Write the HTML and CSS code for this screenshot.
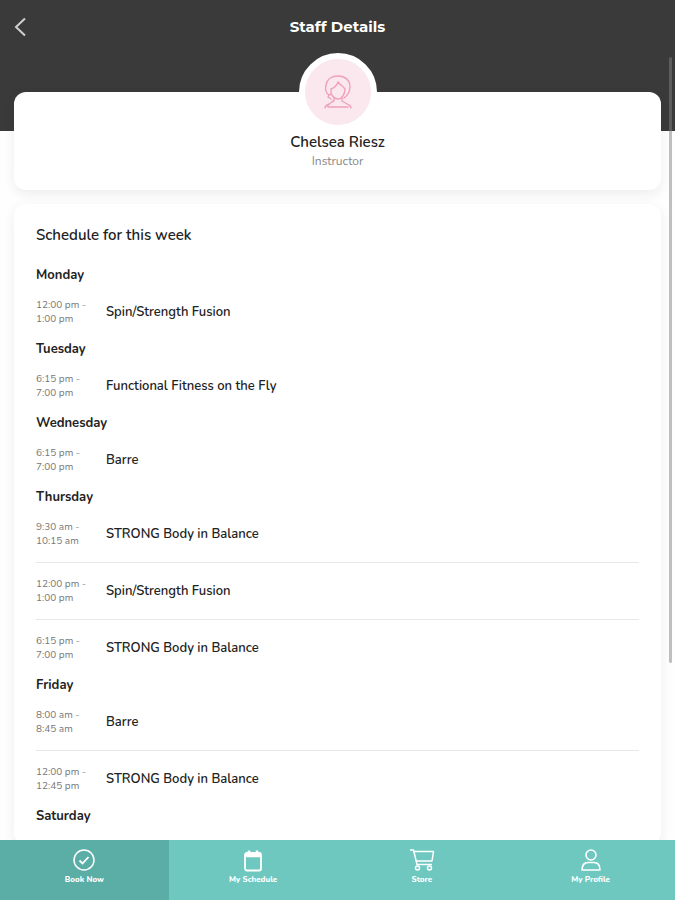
FILE: index.html
```html
<!DOCTYPE html>
<html lang="en">
<head>
    <meta charset="UTF-8">
    <meta name="viewport" content="width=device-width, initial-scale=1.0">
    <title>Staff Details</title>
    <link rel="stylesheet" href="styles.css">
</head>
<body>
    <header class="topbar">
        <button class="back" type="button" aria-label="Back">
            <svg width="12" height="20" viewBox="0 0 12 20" fill="none" stroke="#d0d0d0" stroke-width="2"><path d="M11 1.500L2 10l9 8.500"/></svg>
        </button>
        <h1>Staff Details</h1>
    </header>

    <main class="content">
        <div class="scroll-area">
            <div class="banner"></div>

            <section class="card profile">
                <div class="avatar">
                    <svg width="30" height="36" viewBox="0 0 30 36" fill="none" stroke="#f0a0b8" stroke-width="1.400" stroke-linecap="round" stroke-linejoin="round">
                        <path d="M8 25L5 23L6 21C3 19 2 15 3 11C4 5 9 2 15 2C22 2 27 6 27 13C27 18 25 21 21 24"/>
                        <path d="M6 21C9 21 8 18 8 15C11 14 14 11 15 8C17 11 20 12 22 15C22 20 19 25 15 25C12 25 9 22 8 19"/>
                        <path d="M11 24v3L4 31q-2 1-2 3M19 24v3l7 4q2 1 2 3M5 33h20M10 27l-6 5"/>
                    </svg>
                </div>
                <h2>Chelsea Riesz</h2>
                <p>Instructor</p>
            </section>

            <section class="card schedule">
                <h2>Schedule for this week</h2>

                <h3>Monday</h3>
                <ul>
                    <li><span class="time">12:00 pm - 1:00 pm</span><span class="class-name">Spin/Strength Fusion</span></li>
                </ul>

                <h3>Tuesday</h3>
                <ul>
                    <li><span class="time">6:15 pm - 7:00 pm</span><span class="class-name">Functional Fitness on the Fly</span></li>
                </ul>

                <h3>Wednesday</h3>
                <ul>
                    <li><span class="time">6:15 pm - 7:00 pm</span><span class="class-name">Barre</span></li>
                </ul>

                <h3>Thursday</h3>
                <ul>
                    <li><span class="time">9:30 am - 10:15 am</span><span class="class-name">STRONG Body in Balance</span></li>
                    <li><span class="time">12:00 pm - 1:00 pm</span><span class="class-name">Spin/Strength Fusion</span></li>
                    <li><span class="time">6:15 pm - 7:00 pm</span><span class="class-name">STRONG Body in Balance</span></li>
                </ul>

                <h3>Friday</h3>
                <ul>
                    <li><span class="time">8:00 am - 8:45 am</span><span class="class-name">Barre</span></li>
                    <li><span class="time">12:00 pm - 12:45 pm</span><span class="class-name">STRONG Body in Balance</span></li>
                </ul>

                <h3>Saturday</h3>
            </section>
        </div>
        <div class="scrollbar"></div>
    </main>

    <nav class="tabbar">
        <a href="#book" class="active">
            <svg width="24" height="24" viewBox="0 0 24 24" fill="none" stroke="currentColor" stroke-width="1.500"><circle cx="12" cy="12" r="10"/><path d="M7.500 12.500l3 3l6-6.500" stroke-width="1.800"/></svg>
            Book Now
        </a>
        <a href="#schedule">
            <svg width="24" height="24" viewBox="0 0 24 24" fill="none" stroke="currentColor" stroke-width="1.800"><rect x="4" y="5" width="16" height="17.500" rx="2"/><path d="M4 7h16" stroke-width="4.500"/><path d="M8 2.500v3M16 2.500v3" stroke-width="2.500"/></svg>
            My Schedule
        </a>
        <a href="#store">
            <svg width="26" height="24" viewBox="0 0 26 24" fill="none" stroke="currentColor" stroke-width="1.500" stroke-linejoin="round"><path d="M1 2h3.500L8 16.500h15M5 3.500H24.500L23 13H7"/><circle cx="8.500" cy="20" r="2"/><circle cx="20.500" cy="20" r="2"/></svg>
            Store
        </a>
        <a href="#profile">
            <svg width="24" height="24" viewBox="0 0 24 24" fill="none" stroke="currentColor" stroke-width="1.600" stroke-linejoin="round"><circle cx="12" cy="7" r="5"/><path d="M3 22c0-5 2.500-7.500 6-7.500h6c3.500 0 6 2.500 6 7.500z"/></svg>
            My Profile
        </a>
    </nav>
</body>
</html>
```

FILE: styles.css
```css
* {
    box-sizing: border-box;
}

body {
    font-family: Nunito, "Noto Sans", sans-serif;
    background-color: #fefefe;
    color: #222;
    margin: 0;
    height: 100vh;
    display: flex;
    flex-direction: column;
}

h1, h2, h3, p, ul {
    margin: 0;
    padding: 0;
}

.topbar {
    background-color: #3a3a3a;
    color: #fff;
    display: grid;
    grid-template-columns: 40px 1fr 40px;
    align-items: center;
    flex: none;
    height: 53px;
}

.topbar h1 {
    font-family: Montserrat, Inter, sans-serif;
    font-size: 15px;
    font-weight: 700;
    line-height: 20px;
    text-align: center;
}

.back {
    background: none;
    border: none;
    padding: 0;
    height: 40px;
    display: flex;
    align-items: center;
    justify-content: center;
    cursor: pointer;
}

.content {
    position: relative;
    flex: 1;
    min-height: 0;
}

.scroll-area {
    height: 100%;
    overflow-y: auto;
    scrollbar-width: none;
}

.scrollbar {
    position: absolute;
    top: 4px;
    right: 3px;
    width: 3px;
    height: 77%;
    border-radius: 2px;
    background-color: rgba(128, 128, 128, 0.5);
}

.banner {
    background-color: #3a3a3a;
    height: 78px;
}

.card {
    background-color: #fff;
    border-radius: 12px;
    margin: 0 14px;
    box-shadow: 0 4px 12px rgba(40, 40, 60, 0.08);
}

.profile {
    display: flex;
    flex-direction: column;
    align-items: center;
    margin-top: -39px;
    padding-bottom: 21px;
}

.avatar {
    display: flex;
    align-items: center;
    justify-content: center;
    width: 78px;
    height: 78px;
    margin-top: -39px;
    border: 6px solid #fff;
    border-radius: 50%;
    background-color: #fae8ee;
}

.profile h2 {
    font-size: 15px;
    font-weight: 600;
    line-height: 22px;
}

.profile p {
    color: #888;
    font-size: 12px;
    line-height: 16px;
}

.schedule {
    margin-top: 14px;
    padding: 20px 22px;
}

.schedule h2 {
    font-size: 15px;
    font-weight: 600;
    line-height: 22px;
    margin-bottom: 20px;
}

.schedule h3 {
    font-size: 13px;
    font-weight: 700;
    line-height: 18px;
}

.schedule ul {
    list-style: none;
}

.schedule li {
    display: flex;
    align-items: center;
    gap: 16px;
    padding: 14px 0;
}

.schedule li + li {
    border-top: 1px solid #e8e8e8;
}

.time {
    width: 54px;
    color: #777;
    font-size: 10px;
    line-height: 14px;
}

.class-name {
    font-size: 13px;
    font-weight: 600;
    line-height: 18px;
}

.tabbar {
    display: flex;
    flex: none;
    height: 60px;
    background-color: #6ec8c0;
}

.tabbar a {
    flex: 1;
    display: flex;
    flex-direction: column;
    align-items: center;
    gap: 2px;
    padding-top: 8px;
    color: #fff;
    font-size: 8px;
    font-weight: 800;
    line-height: 12px;
    text-decoration: none;
}

.tabbar a.active {
    background-color: #5baea6;
}
```
